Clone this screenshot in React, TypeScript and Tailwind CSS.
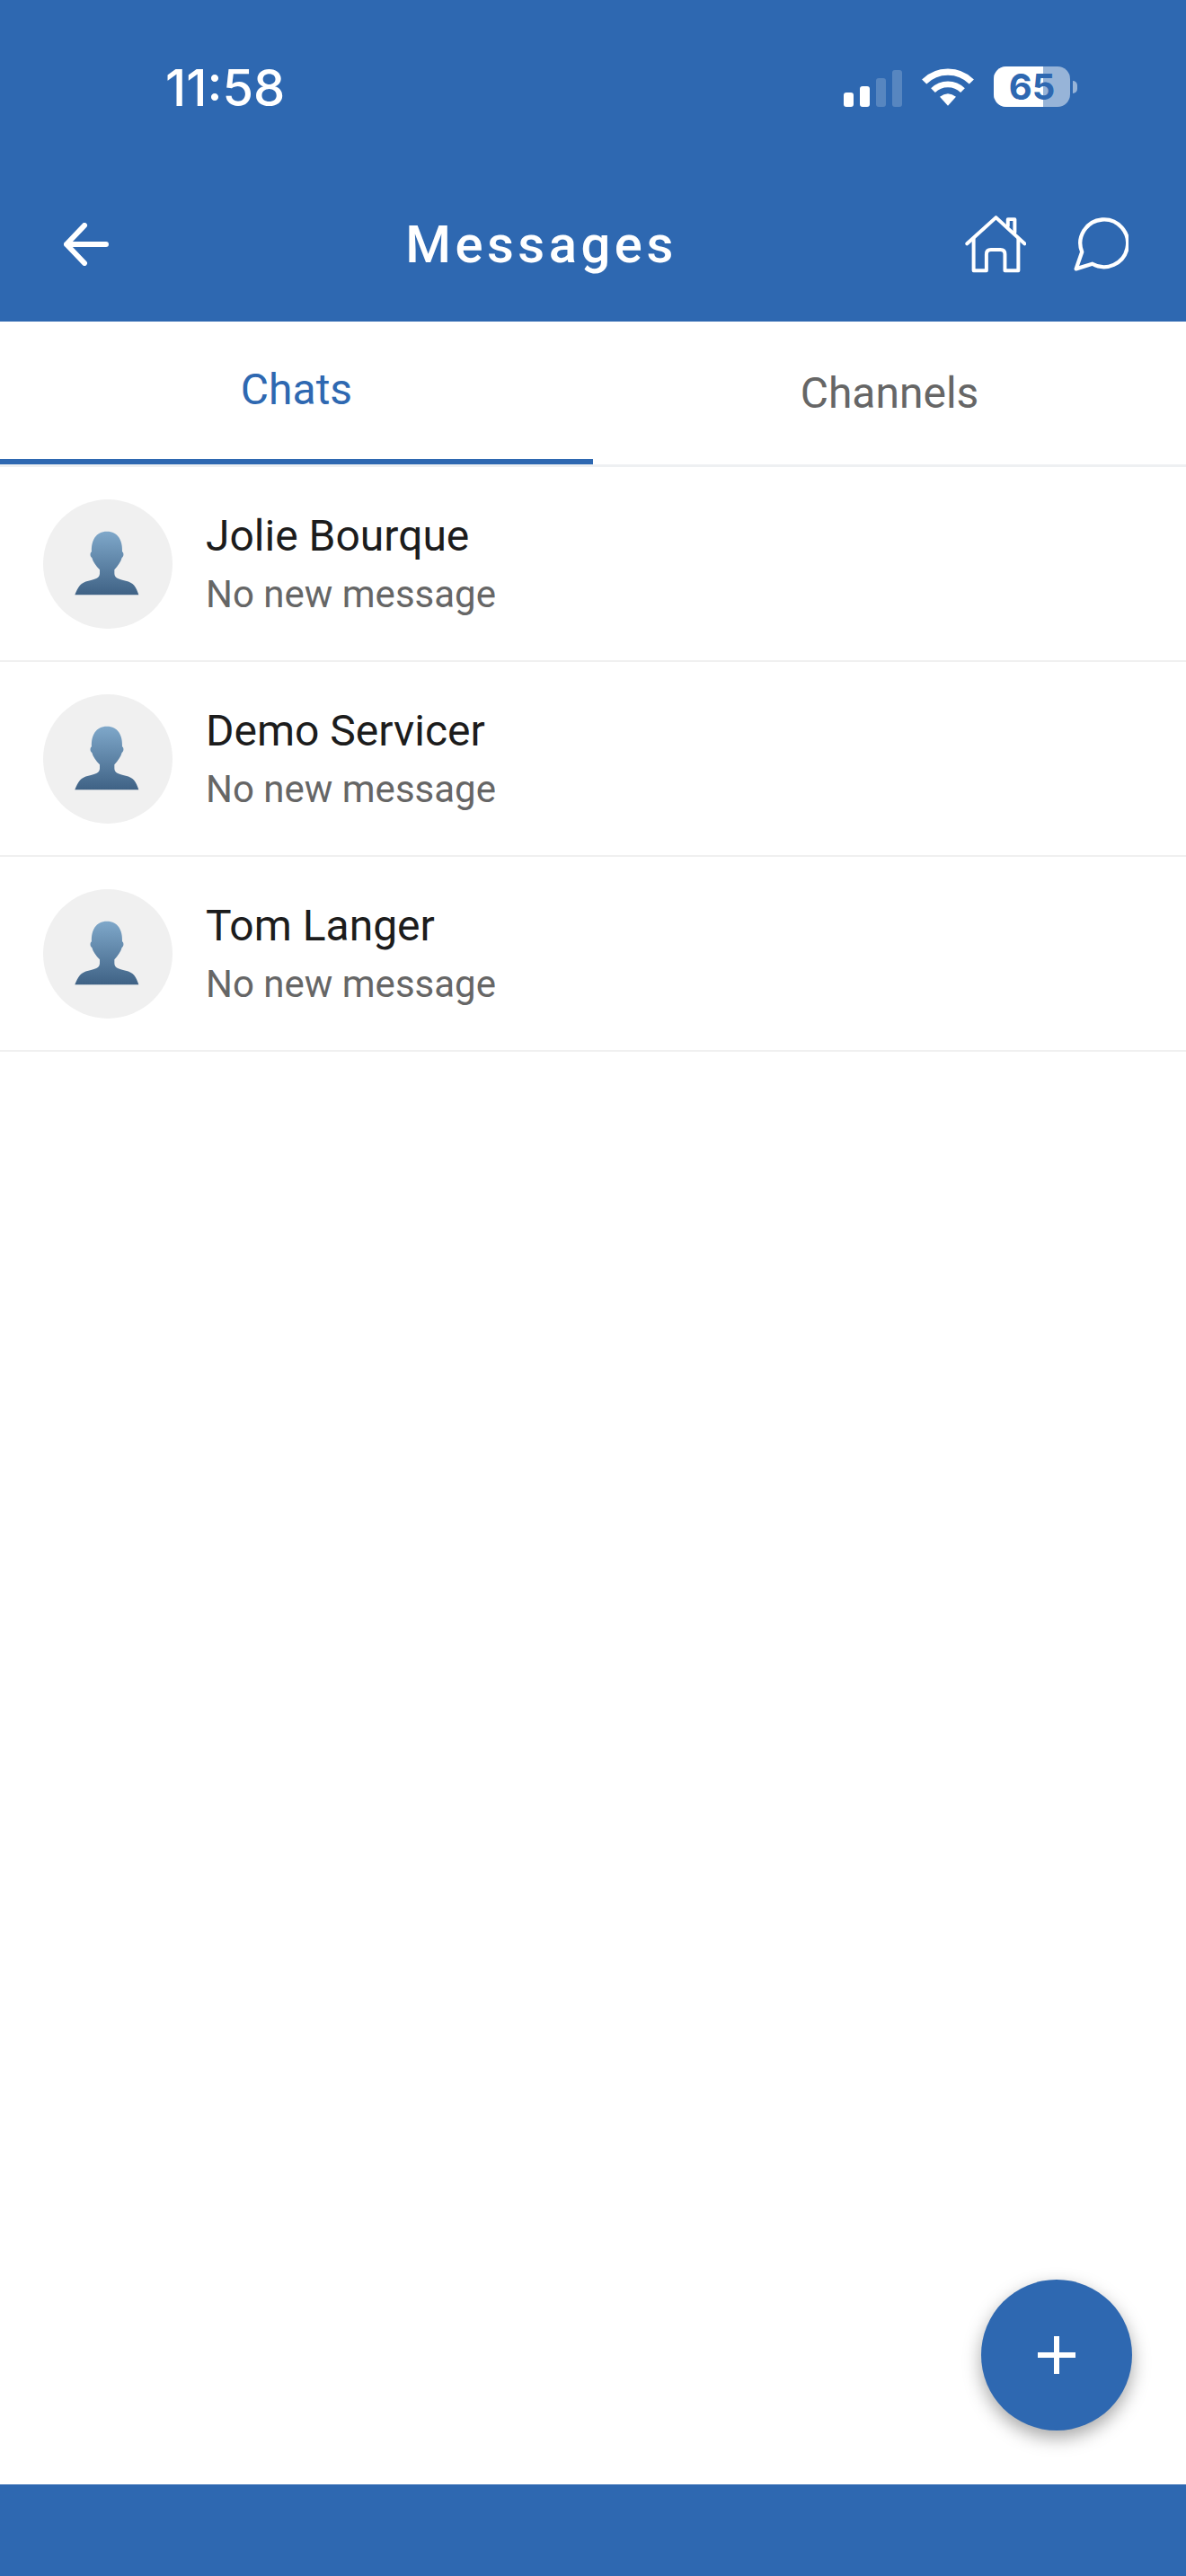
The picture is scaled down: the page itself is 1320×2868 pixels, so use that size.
const contacts = ["Jolie Bourque", "Demo Servicer", "Tom Langer"];

function Wifi() {
  return (
    <svg viewBox="430 70 180 135" className="h-[45px] w-[60px]" fill="none" stroke="white">
      <path d="M441 121A112 112 0 0 1 599 121" strokeWidth="22" />
      <path d="M470.500 150A70 70 0 0 1 569.500 150" strokeWidth="20" />
      <path d="M520 201L493 171Q520 150 547 171Z" fill="white" stroke="none" />
    </svg>
  );
}

function Battery() {
  return (
    <div className="flex items-center gap-[3px]">
      <div className="relative flex h-[45px] w-[85px] items-center justify-center rounded-[14px] bg-white/50">
        <div className="absolute inset-y-0 left-0 w-[55px] rounded-l-[14px] bg-white" />
        <span className="relative font-['Inter',sans-serif] text-[40px] leading-none font-bold text-[#2e68b1]">65</span>
      </div>
      <div className="h-[14px] w-[5px] rounded-r-full bg-white/50" />
    </div>
  );
}

function StatusBar() {
  return (
    <div className="flex h-[190px] items-start justify-between pt-[68px] pr-[121px] pl-[184px]">
      <span className="font-['Inter',sans-serif] text-[56px] leading-[60px] font-medium text-white">11:58</span>
      <div className="mt-[6px] flex items-end">
        <div className="flex items-end gap-[7px]">
          <div className="h-[16px] w-[11px] rounded-[3px] bg-white" />
          <div className="h-[23px] w-[11px] rounded-[3px] bg-white" />
          <div className="h-[32px] w-[11px] rounded-[3px] bg-white/20" />
          <div className="h-[41px] w-[11px] rounded-[3px] bg-white/20" />
        </div>
        <div className="mr-[21px] ml-[21px]">
          <Wifi />
        </div>
        <Battery />
      </div>
    </div>
  );
}

function Header() {
  return (
    <div className="flex h-[168px] items-center pr-[64px] pb-[5px] pl-[71px]">
      <svg viewBox="0 0 50 48" className="h-[48px] w-[50px]" fill="none" stroke="white" strokeWidth="6" strokeLinecap="round" strokeLinejoin="round">
        <path d="M47 24H3M23 3L3 24L23 45" />
      </svg>
      <div className="ml-[10px] flex-1 text-center font-['Roboto',sans-serif] text-[58px] leading-none font-medium tracking-[4.500px] text-white">
        Messages
      </div>
      <svg viewBox="578 568 205 195" className="h-[65px] w-[68px]" fill="none" stroke="white" strokeWidth="12" strokeLinecap="round" strokeLinejoin="round">
        <path d="M585 665L682 577L778 665" />
        <path d="M607 648V755H650V700Q650 685 665 685H697Q712 685 712 700V755H757V648" />
        <path d="M722 605V583H745V627" />
      </svg>
      <svg viewBox="940 575 185 185" className="ml-[53px] h-[61px] w-[61px]" fill="none" stroke="white" strokeWidth="13" strokeLinejoin="round">
        <path d="M968 695A80 80 0 1 1 1003 735L948 752Z" />
      </svg>
    </div>
  );
}

function Tabs() {
  return (
    <div className="flex h-[162px] border-b-[3px] border-[#eef0f2] font-['Roboto',sans-serif] text-[48px]">
      <div className="flex h-[159px] w-1/2 items-center justify-center border-b-[6px] border-[#2e68b1] pb-[2px] text-[#2e68b1]">
        Chats
      </div>
      <div className="flex h-[159px] w-1/2 items-center justify-center text-[#666666]">
        Channels
      </div>
    </div>
  );
}

function Avatar({ id }: { id: string }) {
  return (
    <div className="h-[144px] w-[144px] shrink-0 rounded-full bg-[#f0f0f0]">
      <svg viewBox="24 33 432 432" className="h-[144px] w-[144px]">
        <defs>
          <linearGradient id={id} x1="0" y1="0" x2="0" y2="1">
            <stop offset="0" stopColor="#7fa8ca" />
            <stop offset="1" stopColor="#3f6285" />
          </linearGradient>
        </defs>
        <path
          d="M130 352C140 325 150 310 175 305C200 300 213 295 213 280L213 268C200 255 190 240 187 228C180 225 180 210 186 208C184 170 200 140 237 140C274 140 290 170 288 208C294 210 294 225 287 228C284 240 274 255 262 268L262 280C262 295 275 300 300 305C325 310 335 325 343 352Z"
          fill={`url(#${id})`}
        />
      </svg>
    </div>
  );
}

function ChatRow({ name, index }: { name: string; index: number }) {
  return (
    <div className="box-border flex h-[217px] items-center gap-[37px] border-b-2 border-[#f0f0f0] pl-[48px] font-['Roboto',sans-serif]">
      <Avatar id={`person-${index}`} />
      <div className="pt-[2px]">
        <div className="text-[48px] leading-[65px] text-[#1c1c1c]">{name}</div>
        <div className="text-[42px] leading-[65px] text-[#666666]">No new message</div>
      </div>
    </div>
  );
}

export default function App() {
  return (
    <div className="flex h-[2868px] w-[1320px] flex-col bg-white">
      <div className="bg-[#2e68b1]">
        <StatusBar />
        <Header />
      </div>
      <Tabs />
      <div className="relative flex-1">
        {contacts.map((name, i) => (
          <ChatRow key={name} name={name} index={i} />
        ))}
        <div className="absolute right-[60px] bottom-[60px] flex h-[168px] w-[168px] items-center justify-center rounded-full bg-[#2e68b1] shadow-[0_8px_20px_rgba(0,0,0,0.35)]">
          <svg viewBox="0 0 42 42" className="h-[42px] w-[42px]" fill="white">
            <path d="M18 0h6v18h18v6H24v18h-6V24H0v-6h18z" />
          </svg>
        </div>
      </div>
      <div className="h-[102px] bg-[#2e68b1]" />
    </div>
  );
}
